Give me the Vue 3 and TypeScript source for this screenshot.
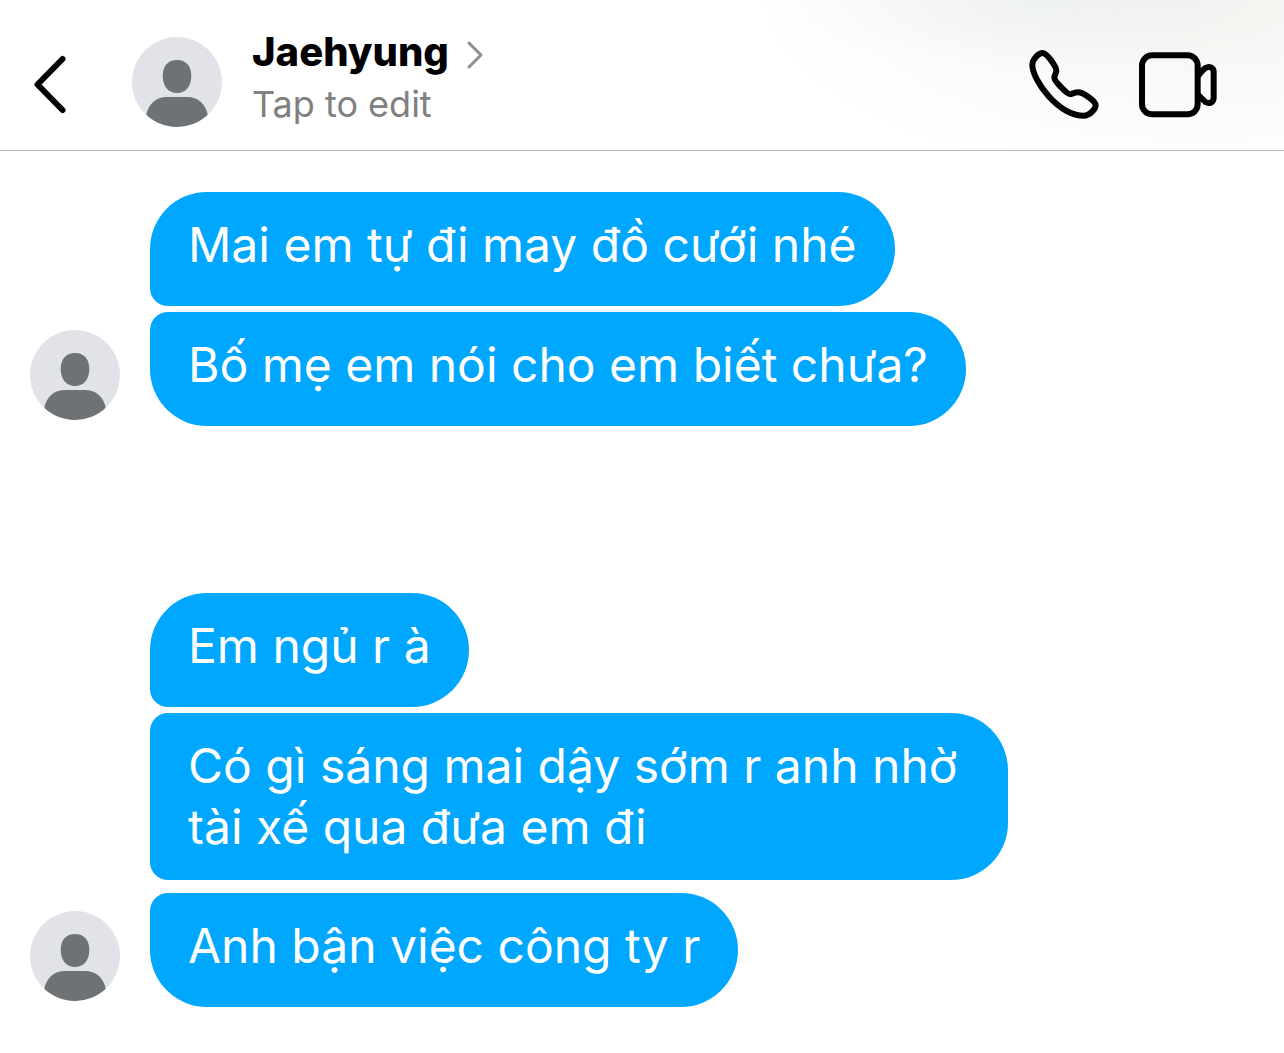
<script setup lang="ts">
import { defineComponent, h } from 'vue'

interface Group {
  id: number
  messages: string[]
}

const contact = 'Jaehyung'

const groups: Group[] = [
  { id: 1, messages: ['Mai em tự đi may đồ cưới nhé', 'Bố mẹ em nói cho em biết chưa?'] },
  {
    id: 2,
    messages: ['Em ngủ r à', 'Có gì sáng mai dậy sớm r anh nhờ tài xế qua đưa em đi', 'Anh bận việc công ty r'],
  },
]

const Avatar = defineComponent({
  setup() {
    return () =>
      h('svg', { viewBox: '0 0 90 90', width: 90, height: 90, 'aria-hidden': 'true', style: { display: 'block', borderRadius: '50%' } }, [
        h('rect', { width: 90, height: 90, fill: '#e1e3e8' }),
        h('path', {
          d: 'M45 23C54 23 59.3 29 59.3 39C59.3 49.5 53.5 56 45 56C36.5 56 30.7 49.5 30.7 39C30.7 29 36 23 45 23Z',
          fill: '#6e7275',
        }),
        h('path', { d: 'M14 79C16 67 24 60 35 60H55C66 60 74 67 76 79V90H14Z', fill: '#6e7275' }),
      ])
  },
})
</script>

<template>
  <div class="chat">
    <header class="bar">
      <button class="icon-button back" type="button" aria-label="Back">
        <svg viewBox="0 0 40 64" width="40" height="64">
          <path d="M32.500 7L7.500 32.500L32.500 58" fill="none" stroke="#000" stroke-width="6" stroke-linecap="round" stroke-linejoin="round" />
        </svg>
      </button>
      <Avatar />
      <button class="contact" type="button">
        <span class="name">
          {{ contact }}
          <svg viewBox="0 0 18 34" width="18" height="34" aria-hidden="true">
            <path d="M4 8L16 20L4 32" fill="none" stroke="#8e8e93" stroke-width="3" stroke-linecap="round" stroke-linejoin="round" />
          </svg>
        </span>
        <span class="hint">Tap to edit</span>
      </button>
      <nav class="actions">
        <button class="icon-button" type="button" aria-label="Voice call">
          <svg viewBox="51 51 219 219" width="73" height="73">
            <path
              d="M97 69C87 69 67 87 67 104C67 152 146 257 222 257C238 257 257 238 257 226C257 213 220 187 203 187C194 187 186 192 180 192C171 192 133 153 133 143C133 135 139 130 139 122C139 112 112 69 97 69Z"
              fill="none" stroke="#000" stroke-width="18" stroke-linejoin="round"
            />
          </svg>
        </button>
        <button class="icon-button" type="button" aria-label="Video call">
          <svg viewBox="384 51 240 216" width="80" height="72">
            <rect x="396" y="76" width="167" height="177" rx="30" fill="none" stroke="#000" stroke-width="18" />
            <path
              d="M564 138C570 130 578 120 586 114C598 107 611 112 611 126V203C611 217 598 223 586 216C579 209 571 202 564 194"
              fill="none" stroke="#000" stroke-width="18"
            />
          </svg>
        </button>
      </nav>
    </header>

    <main class="thread">
      <section v-for="group in groups" :key="group.id" class="group">
        <div class="sender"><Avatar /></div>
        <ul class="messages">
          <li v-for="message in group.messages" :key="message" class="bubble">{{ message }}</li>
        </ul>
      </section>
    </main>
  </div>
</template>

<style>
body {
  margin: 0;
  background: #fff;
}
</style>

<style scoped>
.chat {
  font-family: Inter, "Liberation Sans", sans-serif;
  background: #fff;
}

.bar {
  display: flex;
  align-items: center;
  box-sizing: border-box;
  min-height: 151px;
  padding: 14px 66px 0 30px;
  border-bottom: 1px solid #bbb;
  background:
    radial-gradient(ellipse 280px 70px at 1040px 0, rgba(222, 232, 232, 0.4), rgba(222, 232, 232, 0)),
    radial-gradient(ellipse 440px 180px at 1200px 0, #f5f4f1, rgba(255, 254, 252, 0)),
    #fff;
}

button {
  padding: 0;
  border: 0;
  background: none;
  font: inherit;
  color: inherit;
  text-align: left;
  cursor: pointer;
}

.icon-button svg {
  display: block;
}

.back {
  margin: 4px 62px 0 0;
}

.contact {
  display: flex;
  flex-direction: column;
  margin: 0 auto 8px 30px;
}

.name {
  display: flex;
  align-items: center;
  gap: 16px;
  font-size: 40px;
  font-weight: 800;
  line-height: 52px;
  color: #000;
}

.hint {
  font-size: 36px;
  line-height: 52px;
  color: #808080;
}

.actions {
  display: flex;
  align-items: center;
  gap: 38px;
  padding-top: 2px;
}

.thread {
  display: flex;
  flex-direction: column;
  gap: 167px;
  padding: 41px 30px 46px;
}

.group {
  display: flex;
  align-items: flex-end;
  gap: 30px;
}

.sender {
  flex: none;
  padding-bottom: 6px;
}

.messages {
  display: flex;
  flex-direction: column;
  align-items: flex-start;
  gap: 6px;
  flex: 1;
  margin: 0;
  padding: 0;
  list-style: none;
}

.bubble {
  box-sizing: border-box;
  min-height: 114px;
  max-width: 858px;
  padding: 22px 38px 23px;
  border-radius: 18px 57px 57px 18px;
  background: #00a7ff;
  color: #fff;
  font-size: 48px;
  line-height: 61px;
}

.bubble:first-child {
  border-top-left-radius: 57px;
}

.bubble:last-child {
  border-bottom-left-radius: 57px;
}

.bubble:nth-child(3) {
  margin-top: 7px;
}
</style>
